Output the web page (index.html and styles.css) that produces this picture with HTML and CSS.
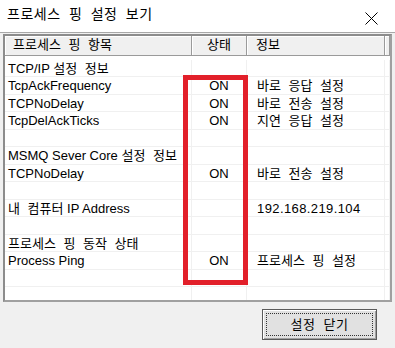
FILE: index.html
```html
<!DOCTYPE html>
<html>
<head>
  <meta charset="utf-8">
  <title>프로세스 핑 설정 보기</title>
  <link rel="stylesheet" href="styles.css">
</head>
<body>
  <div class="window">
    <div class="titlebar">
      <span class="title ko">프로세스 핑 설정 보기</span>
      <svg class="close" width="13" height="13" viewBox="0 0 13 13">
        <path d="M0.5 0.5 L12.5 12.5 M12.5 0.5 L0.5 12.5" stroke="#000" stroke-width="1" fill="none"/>
      </svg>
    </div>

    <div class="content">
      <div class="list">
        <div class="list-head">
          <div class="head-cell ko">프로세스 핑 항목</div>
          <div class="head-cell center ko">상태</div>
          <div class="head-cell ko col-info">정보</div>
          <div class="head-cell filler"></div>
        </div>

        <div class="list-rows">
          <div class="row"><span>TCP/IP <em class="ko">설정 정보</em></span><span></span><span></span><span></span></div>
          <div class="row"><span>TcpAckFrequency</span><span class="center">ON</span><span class="ko info">바로 응답 설정</span><span></span></div>
          <div class="row"><span>TCPNoDelay</span><span class="center">ON</span><span class="ko info">바로 전송 설정</span><span></span></div>
          <div class="row"><span>TcpDelAckTicks</span><span class="center">ON</span><span class="ko info">지연 응답 설정</span><span></span></div>
          <div class="row"><span></span><span></span><span></span><span></span></div>
          <div class="row"><span>MSMQ Sever Core <em class="ko">설정 정보</em></span><span></span><span></span><span></span></div>
          <div class="row"><span>TCPNoDelay</span><span class="center">ON</span><span class="ko info">바로 전송 설정</span><span></span></div>
          <div class="row"><span></span><span></span><span></span><span></span></div>
          <div class="row"><span><em class="ko">내 컴퓨터</em> IP Address</span><span></span><span class="info ip">192.168.219.104</span><span></span></div>
          <div class="row"><span></span><span></span><span></span><span></span></div>
          <div class="row"><span class="ko">프로세스 핑 동작 상태</span><span></span><span></span><span></span></div>
          <div class="row"><span>Process Ping</span><span class="center">ON</span><span class="ko info">프로세스 핑 설정</span><span></span></div>
          <div class="row"><span></span><span></span><span></span><span></span></div>
          <div class="row"><span></span><span></span><span></span><span></span></div>
        </div>
      </div>

      <div class="footer">
        <button class="close-btn ko"><span class="focus">설정 닫기</span></button>
      </div>
    </div>

    <!-- red marker drawn over the state column -->
    <div class="highlight"></div>
  </div>
</body>
</html>
```

FILE: styles.css
```css
body {
  margin: 0;
  background: #f0f0f0;
  font-family: "Liberation Sans", "Noto Sans CJK KR", sans-serif;
  font-size: 13px;
  color: #000;
}

.window {
  position: relative;
  width: 395px;
  height: 348px;
  overflow: hidden;
  background: #f0f0f0;
}

.ko {
  word-spacing: 4px;
}

em {
  font-style: normal;
}

/* Title bar */
.titlebar {
  height: 32px;
  background: #fff;
  border-bottom: 1px solid #a8a8a8;
  display: flex;
  justify-content: space-between;
  align-items: flex-start;
  padding: 0 17px 0 7px;
  box-sizing: content-box;
}

.title {
  font-size: 14px;
  line-height: 18px;
  margin-top: 5px;
  letter-spacing: 0.5px;
}

.close {
  margin-top: 12px;
}

/* List view */
.content {
  padding: 1px 3px 0 3px;
}

.list {
  height: 268px;
  box-sizing: border-box;
  border: 2px solid #a0a0a0;
  border-top-color: #8c8c8c;
  border-left-color: #8c8c8c;
  background: #fff;
  overflow: hidden;
}

.list-head,
.row {
  display: grid;
  grid-template-columns: 187px 55px 138px 1fr;
}

.head-cell {
  height: 20px;
  box-sizing: border-box;
  line-height: 18px;
  padding-left: 8px;
  background: #f0f0f0;
  border-right: 1px solid #9a9a9a;
  border-bottom: 1px solid #9a9a9a;
  box-shadow: inset 1px 1px 0 #fff;
  white-space: nowrap;
}

.head-cell.center {
  padding-left: 0;
  text-align: center;
}

.head-cell.col-info {
  padding-left: 9px;
}

.head-cell.filler {
  padding: 0;
}

.list-rows {
  padding-top: 3.5px;
}

.row {
  height: 17.5px;
  box-sizing: border-box;
  border-bottom: 1px solid #f0f0f0;
}

.row > span {
  line-height: 17px;
  padding-left: 3px;
  border-right: 1px solid #f0f0f0;
  white-space: nowrap;
}

.row > span.center {
  padding-left: 0;
  text-align: center;
}

.row > span.info {
  padding-left: 10px;
}

.ip {
  letter-spacing: 0.4px;
}

/* Footer button */
.footer {
  display: flex;
  justify-content: flex-end;
  padding: 7px 15px 0 0;
}

.close-btn {
  width: 115px;
  height: 31px;
  padding: 3px;
  background: #e1e1e1;
  border: 1px solid #5a5a5a;
  box-shadow: inset 1px 1px 0 #fff, inset -1px -1px 0 #a0a0a0;
  font-family: "Liberation Sans", "Noto Sans CJK KR", sans-serif;
  font-size: 13px;
  color: #000;
}

.close-btn .focus {
  display: block;
  height: 100%;
  box-sizing: border-box;
  border: 1px dotted #333;
  line-height: 21px;
  letter-spacing: 0.5px;
}

/* Red marker */
.highlight {
  position: absolute;
  left: 183px;
  top: 75px;
  width: 65px;
  height: 210px;
  box-sizing: border-box;
  border: 5px solid #e2202a;
}
```
